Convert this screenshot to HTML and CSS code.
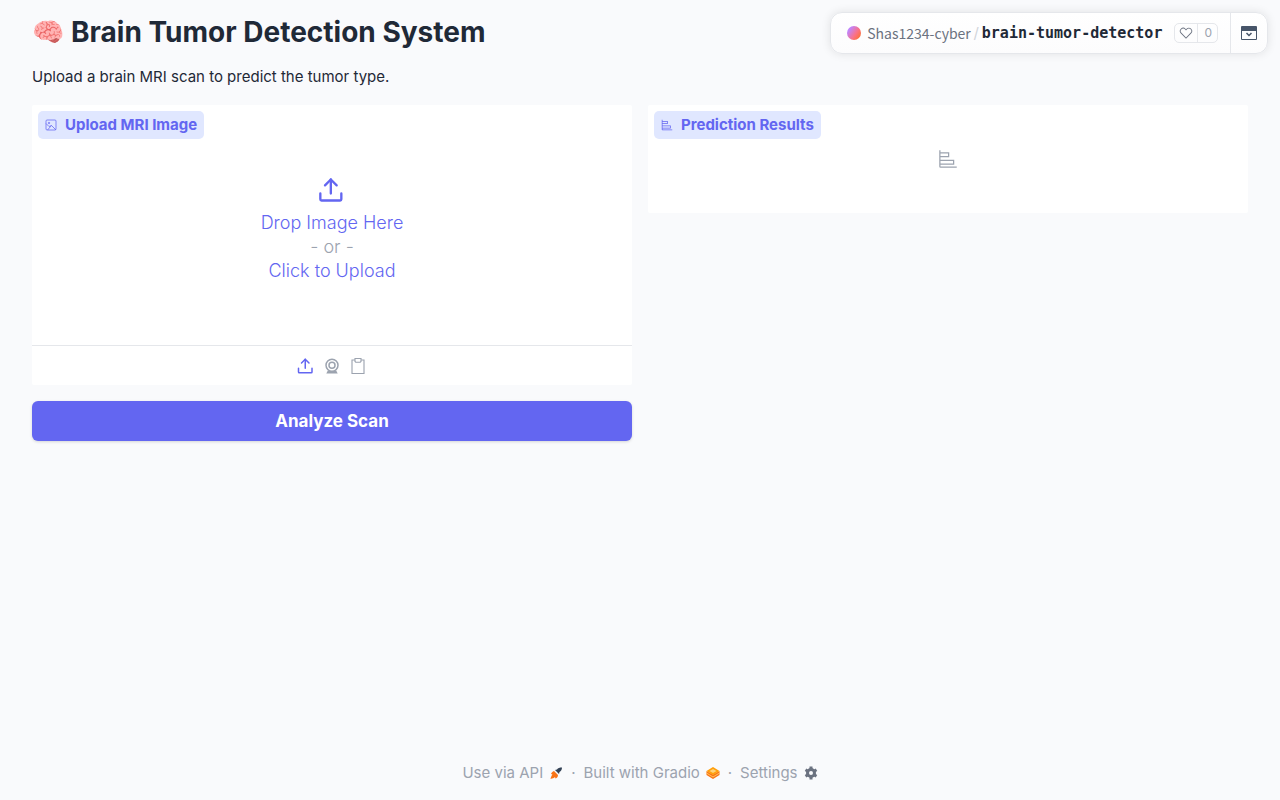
FILE: index.html
```html
<!DOCTYPE html>
<html lang="en">

<head>
    <meta charset="UTF-8">
    <meta name="viewport" content="width=device-width, initial-scale=1.0">
    <title>Brain Tumor Detection System</title>
    <link rel="stylesheet" href="styles.css">
</head>

<body>
    <!-- Space header -->
    <nav class="space-bar">
        <div class="space-name">
            <span class="avatar"></span>
            <a class="owner" href="#">Shas1234-cyber</a>
            <span class="slash">/</span>
            <a class="repo" href="#">brain-tumor-detector</a>
            <button class="like" aria-label="Like">
                <span class="heart">
                    <svg width="14" height="14" viewBox="0 0 32 32" fill="currentColor"><path d="M22.45 6a5.47 5.47 0 0 1 3.91 1.64 5.7 5.7 0 0 1 0 8L16 26.13 5.64 15.64a5.7 5.7 0 0 1 0-8 5.48 5.48 0 0 1 7.82 0L16 10.24l2.53-2.58A5.44 5.44 0 0 1 22.45 6m0-2a7.47 7.47 0 0 0-5.34 2.24L16 7.36l-1.11-1.12a7.49 7.49 0 0 0-10.68 0 7.72 7.72 0 0 0 0 10.82L16 29l11.79-11.94a7.72 7.72 0 0 0 0-10.82A7.49 7.49 0 0 0 22.45 4Z"/></svg>
                </span>
                <span class="count">0</span>
            </button>
        </div>
        <button class="collapse" aria-label="Collapse">
            <svg width="16" height="14" viewBox="0 0 16 14"><path fill="#475569" fill-rule="evenodd" d="M1 0h14a1 1 0 0 1 1 1v12a1 1 0 0 1-1 1H1a1 1 0 0 1-1-1V1a1 1 0 0 1 1-1Zm0 5v8h14V5Z"/><path fill="none" stroke="#475569" stroke-width="1.5" d="M5.5 7 8 9.5 10.5 7"/></svg>
        </button>
    </nav>

    <main>
        <h1><span class="brain">🧠</span> Brain Tumor Detection System</h1>
        <p class="intro">Upload a brain MRI scan to predict the tumor type.</p>

        <div class="row">
            <div class="column">
                <section class="block">
                    <h2 class="block-label">
                        <svg width="12" height="12" viewBox="0 0 24 24" fill="none" stroke="currentColor" stroke-width="1.5"><rect x="2" y="2" width="20" height="20" rx="2"/><circle cx="8" cy="8" r="1.5"/><path d="M2 9l6 6 5-2 9 9M5 22l8-9"/></svg>
                        Upload MRI Image
                    </h2>
                    <button class="drop-zone">
                        <svg width="28" height="28" viewBox="0 0 24 24" fill="none" stroke="currentColor" stroke-width="2" stroke-linecap="round" stroke-linejoin="round"><path d="M20 15v5a1 1 0 0 1-1 1H3a1 1 0 0 1-1-1v-5"/><path d="m6 8 5-5 5 5"/><path d="M11 3v12"/></svg>
                        <span>Drop Image Here</span>
                        <span class="or">- or -</span>
                        <span>Click to Upload</span>
                    </button>
                    <div class="sources">
                        <button class="source selected" aria-label="Upload file">
                            <svg width="18" height="18" viewBox="0 0 24 24" fill="none" stroke="currentColor" stroke-width="2" stroke-linecap="round" stroke-linejoin="round"><path d="M20 15v5a1 1 0 0 1-1 1H3a1 1 0 0 1-1-1v-5"/><path d="m6 8 5-5 5 5"/><path d="M11 3v12"/></svg>
                        </button>
                        <button class="source" aria-label="Capture from camera">
                            <svg width="18" height="18" viewBox="0 0 24 24" fill="none" stroke="currentColor" stroke-width="2"><circle cx="12" cy="11" r="8"/><circle cx="12" cy="11" r="4"/><path fill="currentColor" d="m7 19-1 2h12l-1-2-5 1Z"/></svg>
                        </button>
                        <button class="source" aria-label="Paste from clipboard">
                            <svg width="18" height="18" viewBox="0 0 24 24" fill="none" stroke="currentColor" stroke-width="1.5"><path d="M8 4H4v18h16V4h-4"/><path d="M8 2h8v4l-1 1H9L8 6Z"/></svg>
                        </button>
                    </div>
                </section>
                <button class="analyze">Analyze Scan</button>
            </div>

            <div class="column">
                <section class="block">
                    <h2 class="block-label">
                        <svg width="12" height="12" viewBox="0 0 32 32" fill="currentColor"><path d="M4 2H2v26a2 2 0 0 0 2 2h26v-2H4v-3h22v-8H4v-4h14V5H4Zm20 17v4H4v-4ZM16 7v4H4V7Z"/></svg>
                        Prediction Results
                    </h2>
                    <div class="empty">
                        <svg width="20" height="20" viewBox="0 0 32 32" fill="currentColor"><path d="M4 2H2v26a2 2 0 0 0 2 2h26v-2H4v-3h22v-8H4v-4h14V5H4Zm20 17v4H4v-4ZM16 7v4H4V7Z"/></svg>
                    </div>
                </section>
            </div>
        </div>
    </main>

    <footer>
        <a href="#">Use via API
            <svg width="14" height="14" viewBox="0 0 28 28"><path fill="#334155" d="M26 3c-5 0-8 1-10 4l-4 1 8 8 1-4c3-2 5-5 5-9Z"/><path fill="#f97316" d="m10 10 8 8c0 4-2 6-5 7l-1-3c-2 2-5 3-9 4 1-4 2-7 4-9l-3-1c1-3 3-5 6-6Z"/></svg>
        </a>
        <span>·</span>
        <a href="#">Built with Gradio
            <svg width="14" height="14" viewBox="0 0 28 28"><path fill="#f97316" d="m1 10 13 7 13-7v8l-13 8-13-8Z"/><path fill="#ffc65c" d="m1 13 13 8 13-8v2l-13 8-13-8Z"/><path fill="#ff9f0a" d="m14 2 13 8-13 8-13-8Z"/><path fill="#ffd27a" d="m14 6 7 4-7 4-7-4Z"/></svg>
        </a>
        <span>·</span>
        <a href="#">Settings
            <svg width="14" height="14" viewBox="0 0 28 28"><g fill="none" stroke="#6b7280"><circle cx="14" cy="14" r="7" stroke-width="6"/><path stroke-width="6" d="M14 1v6m0 14v6M3 7.5l5 3m12 7 5 3m0-13-5 3m-12 7-5 3"/></g></svg>
        </a>
    </footer>
</body>

</html>
```
FILE: styles.css
```css
* {
    box-sizing: border-box;
}

body {
    display: flex;
    flex-direction: column;
    min-height: 100vh;
    margin: 0;
    background: #f9fafc;
    color: #1f2937;
    font-family: Inter, "Open Sans", sans-serif;
    font-size: 15px;
    line-height: 20px;
}

a {
    color: inherit;
    text-decoration: none;
}

button {
    margin: 0;
    padding: 0;
    border: none;
    background: none;
    color: inherit;
    font: inherit;
    cursor: pointer;
}

svg {
    display: block;
    flex: none;
}

.space-bar {
    position: absolute;
    top: 12px;
    right: 12px;
    display: flex;
    height: 42px;
    border: 1px solid #e5e7eb;
    border-radius: 12px;
    background: linear-gradient(#ffffff, #fcfcfd);
    box-shadow: 0 0 10px rgba(0, 0, 0, 0.1);
}

.space-name {
    display: flex;
    align-items: center;
    padding: 0 12px 0 16px;
}

.avatar {
    width: 14px;
    height: 14px;
    margin-right: 6px;
    border-radius: 50%;
    background: linear-gradient(125deg, #c084fc 20%, #fb7185 60%, #f97316);
}

.owner {
    color: #6b7280;
    font-family: "Noto Sans CJK SC", sans-serif;
    font-size: 14px;
}

.slash {
    width: 11px;
    color: #d1d5db;
    text-align: center;
}

.repo {
    font-family: "DejaVu Sans Mono", monospace;
    font-size: 15px;
    font-weight: bold;
}

.like {
    display: flex;
    align-items: center;
    height: 20px;
    margin-left: 12px;
    border: 1px solid #e5e7eb;
    border-radius: 5px;
    color: #6b7280;
    font-size: 12px;
}

.heart {
    padding: 2px 4px;
    border-right: 1px solid #e5e7eb;
}

.count {
    padding: 0 5px 0 6px;
    color: #9ca3af;
}

.collapse {
    width: 37px;
    padding: 0 10px;
    border-left: 1px solid #e5e7eb;
}

main {
    flex: 1;
    padding: 16px 32px;
}

h1 {
    display: flex;
    align-items: center;
    gap: 8px;
    margin: 0;
    font-size: 28px;
    line-height: 32px;
    font-weight: 700;
}

.brain {
    width: 31px;
    font-family: "Noto Color Emoji", sans-serif;
    font-size: 26px;
}

.intro {
    margin: 19px 0 18px;
}

.row {
    display: flex;
    gap: 16px;
    align-items: flex-start;
}

.column {
    display: flex;
    flex: 1;
    flex-direction: column;
    gap: 16px;
}

.block {
    background: #ffffff;
    padding-top: 6px;
    border-radius: 2px;
}

.block-label {
    display: flex;
    align-items: center;
    gap: 8px;
    width: fit-content;
    height: 28px;
    margin: 0 6px;
    padding: 0 7px;
    border-radius: 5px;
    background: #e0e7ff;
    color: #6366f1;
    font-size: 15px;
    font-weight: 700;
}

.drop-zone {
    display: flex;
    flex-direction: column;
    align-items: center;
    width: 100%;
    padding: 37px 0 62px;
    color: #6366f1;
    font-size: 18px;
    font-weight: 300;
    line-height: 24px;
}

.drop-zone svg {
    margin-bottom: 7px;
}

.or {
    color: #9ca3af;
}

.sources {
    display: flex;
    justify-content: center;
    align-items: center;
    gap: 8px;
    height: 40px;
    border-top: 1px solid #e5e7eb;
    color: #9ca3af;
}

.selected {
    color: #6366f1;
}

.analyze {
    height: 40px;
    border-radius: 6px;
    background: #6366f1;
    box-shadow: 0 1px 3px rgba(0, 0, 0, 0.15);
    color: #ffffff;
    font-size: 17px;
    font-weight: 700;
}

.empty {
    display: flex;
    justify-content: center;
    padding: 10px 0 44px;
    color: #9ca3af;
}

footer {
    display: flex;
    justify-content: center;
    gap: 8px;
    padding: 0 0 17px;
    color: #9ca3af;
}

footer a {
    display: flex;
    align-items: center;
    gap: 6px;
}
```
